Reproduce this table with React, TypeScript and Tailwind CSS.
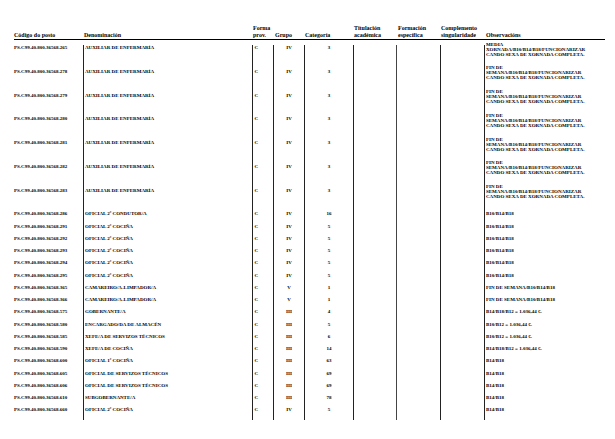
const cols = 'grid grid-cols-[69px_169px_21px_31px_49px_43px_44px_44px_121px]'

type Row = {
  code: string
  name: string
  grupo: string
  cat: string
  obs: string[]
}

const medio = ['MEDIA', 'XORNADA/B10/B14/B18/FUNCIONARIZAR', 'CANDO SEXA DE XORNADA COMPLETA.']
const finde = ['FIN DE', 'SEMANA/B10/B14/B18/FUNCIONARIZAR', 'CANDO SEXA DE XORNADA COMPLETA.']
const aux = 'AUXILIAR DE ENFERMARÍA'
const coc2 = 'OFICIAL 2ª COCIÑA'
const serv = 'OFICIAL DE SERVIZOS TÉCNICOS'

const rows: Row[] = [
  { code: '265', name: aux, grupo: 'IV', cat: '3', obs: medio },
  { code: '278', name: aux, grupo: 'IV', cat: '3', obs: finde },
  { code: '279', name: aux, grupo: 'IV', cat: '3', obs: finde },
  { code: '280', name: aux, grupo: 'IV', cat: '3', obs: finde },
  { code: '281', name: aux, grupo: 'IV', cat: '3', obs: finde },
  { code: '282', name: aux, grupo: 'IV', cat: '3', obs: finde },
  { code: '283', name: aux, grupo: 'IV', cat: '3', obs: finde },
  { code: '286', name: 'OFICIAL 2ª CONDUTOR/A', grupo: 'IV', cat: '16', obs: ['B10/B14/B18'] },
  { code: '291', name: coc2, grupo: 'IV', cat: '5', obs: ['B10/B14/B18'] },
  { code: '292', name: coc2, grupo: 'IV', cat: '5', obs: ['B10/B14/B18'] },
  { code: '293', name: coc2, grupo: 'IV', cat: '5', obs: ['B10/B14/B18'] },
  { code: '294', name: coc2, grupo: 'IV', cat: '5', obs: ['B10/B14/B18'] },
  { code: '295', name: coc2, grupo: 'IV', cat: '5', obs: ['B10/B14/B18'] },
  { code: '365', name: 'CAMAREIRO/A-LIMPADOR/A', grupo: 'V', cat: '1', obs: ['FIN DE SEMANA/B10/B14/B18'] },
  { code: '366', name: 'CAMAREIRO/A-LIMPADOR/A', grupo: 'V', cat: '1', obs: ['FIN DE SEMANA/B10/B14/B18'] },
  { code: '575', name: 'GOBERNANTE/A', grupo: 'III', cat: '4', obs: ['B14/B18/B12 = 1.036,44 €.'] },
  { code: '580', name: 'ENCARGADO/DA DE ALMACÉN', grupo: 'III', cat: '5', obs: ['B10/B12 = 1.036,44 €.'] },
  { code: '585', name: 'XEFE/A DE SERVIZOS TÉCNICOS', grupo: 'III', cat: '6', obs: ['B10/B12 = 1.036,44 €.'] },
  { code: '590', name: 'XEFE/A DE COCIÑA', grupo: 'III', cat: '14', obs: ['B14/B18/B12 = 1.036,44 €.'] },
  { code: '600', name: 'OFICIAL 1ª COCIÑA', grupo: 'III', cat: '63', obs: ['B14/B18'] },
  { code: '605', name: serv, grupo: 'III', cat: '69', obs: ['B14/B18'] },
  { code: '606', name: serv, grupo: 'III', cat: '69', obs: ['B14/B18'] },
  { code: '610', name: 'SUBGOBERNANTE/A', grupo: 'III', cat: '78', obs: ['B14/B18'] },
  { code: '660', name: coc2, grupo: 'IV', cat: '5', obs: ['B14/B18'] },
]

function Head({ lines, className = '' }: { lines: string[]; className?: string }) {
  return (
    <div className={`flex flex-col justify-end ${className}`}>
      {lines.map((l) => (
        <span key={l} className="block whitespace-nowrap">
          {l}
        </span>
      ))}
    </div>
  )
}

export default function App() {
  return (
    <div
      className="w-[615px] h-[439px] bg-white text-black font-bold overflow-hidden"
      style={{ fontFamily: '"Liberation Serif", "Times New Roman", serif' }}
    >
      <div className="ml-[14px] w-[591px]">
        {/* header */}
        <div className={`${cols} h-[40px] items-end border-b border-black pb-[0.75px] text-[6px] leading-[6.5px]`}>
          <Head lines={['Código do posto']} />
          <Head lines={['Denominación']} className="pl-[1px]" />
          <Head lines={['Forma', 'prov.']} className="pl-[1px]" />
          <Head lines={['Grupo']} className="pl-[2px]" />
          <Head lines={['Categoría']} className="pl-[1px]" />
          <Head lines={['Titulación', 'académica']} className="pl-[1px]" />
          <Head lines={['Formación', 'específica']} className="pl-[2px]" />
          <Head lines={['Complemento', 'singularidade']} className="pl-[1px]" />
          <Head lines={['Observacións']} className="pl-[2px]" />
        </div>

        {/* body */}
        <div className="mt-[5px] text-[5px] leading-[5px]">
          {rows.map((r) => {
            const multi = r.obs.length > 1
            return (
              <div key={r.code} className={`${cols} ${multi ? 'h-[23.75px]' : 'h-[12.25px]'} items-start`}>
                <div className="whitespace-nowrap">PS.C99.40.800.36568.{r.code}</div>
                <div className="h-full border-l border-[#222] pl-[1px] whitespace-nowrap">{r.name}</div>
                <div className="h-full border-l border-[#222] pl-[1.5px]">C</div>
                <div className="h-full border-l border-[#222] text-center">{r.grupo}</div>
                <div className="h-full border-l border-[#222] text-center">{r.cat}</div>
                <div className="h-full border-l border-[#222]" />
                <div className="h-full border-l border-[#444]" />
                <div className="h-full border-l border-[#222]" />
                <div className="h-full border-l border-[#222] pl-[1px]">
                  <div className={multi ? '-mt-[3.4px]' : ''}>
                    {r.obs.map((l) => (
                      <span key={l} className="block whitespace-nowrap">
                        {l}
                      </span>
                    ))}
                  </div>
                </div>
              </div>
            )
          })}
        </div>
      </div>
    </div>
  )
}
